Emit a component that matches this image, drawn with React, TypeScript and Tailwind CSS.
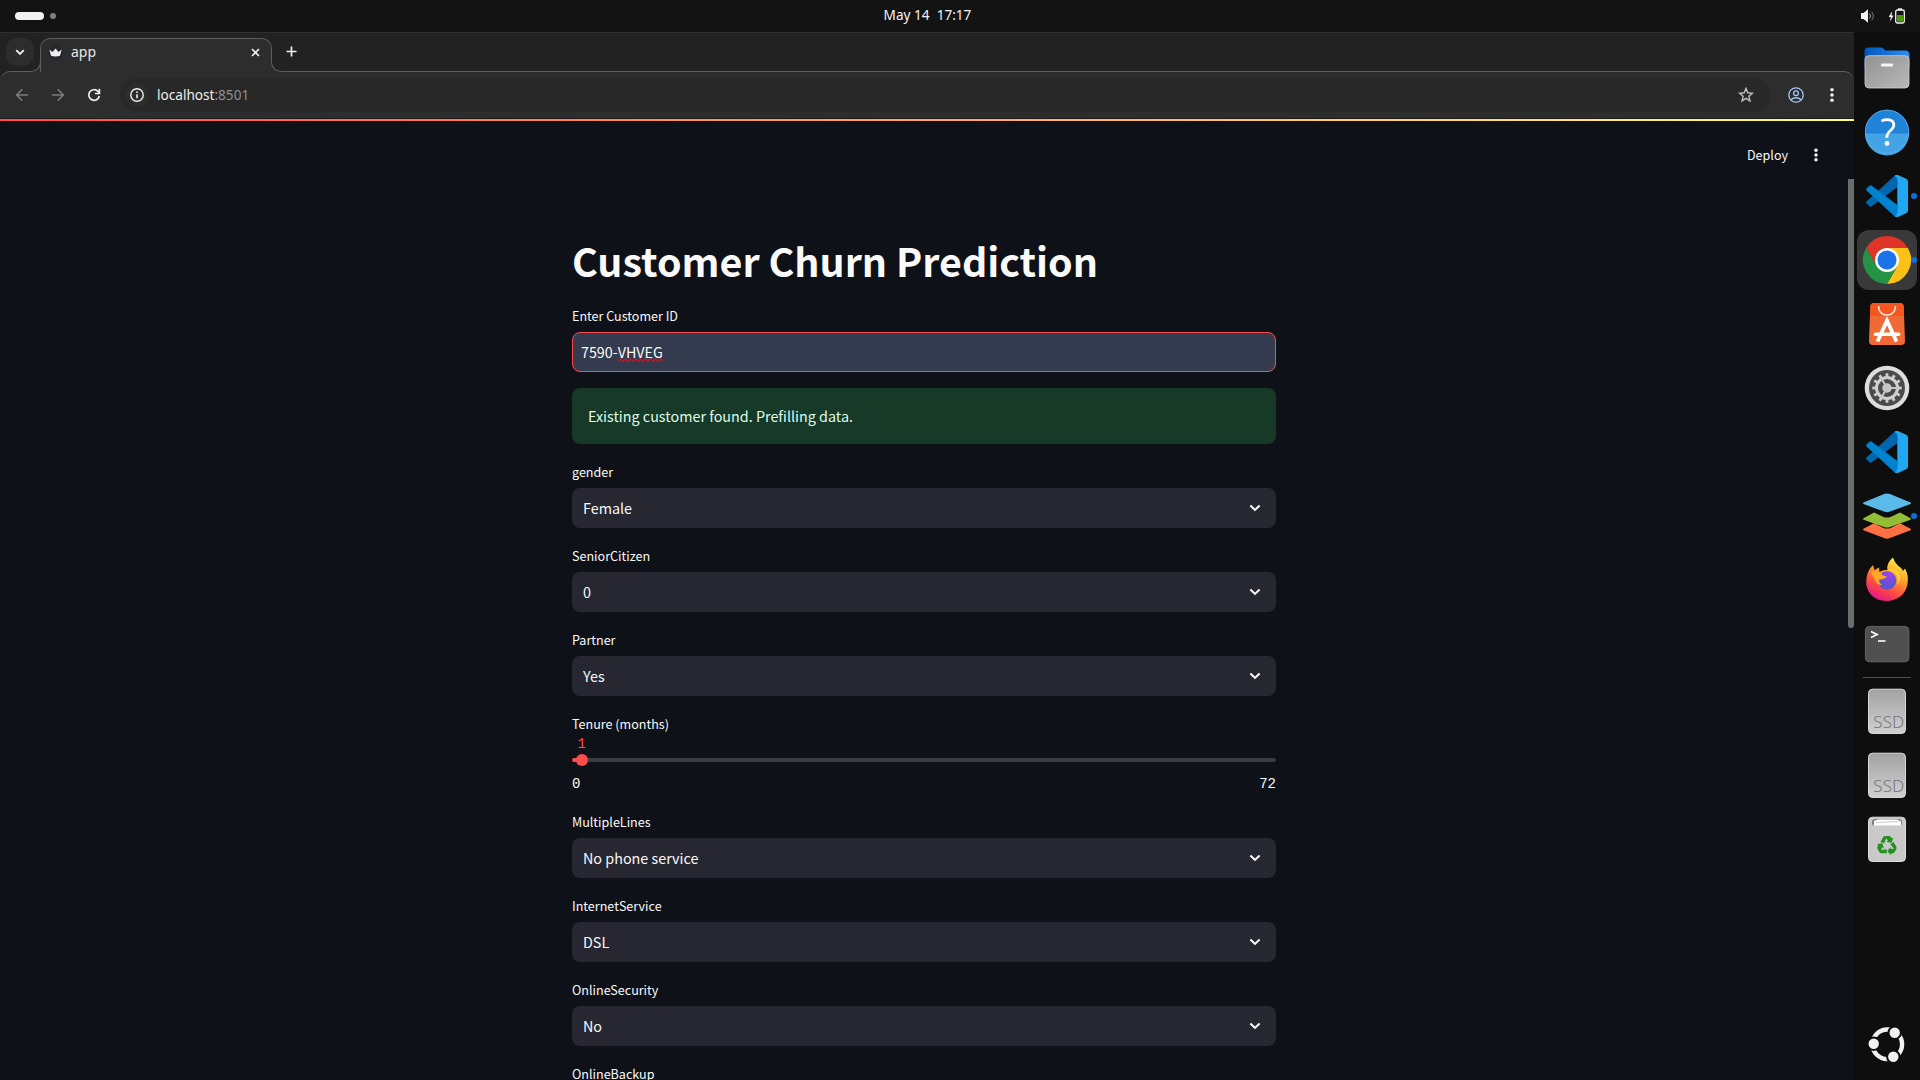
import React from "react";

const SRC = "font-['Noto_Sans_CJK_SC',sans-serif]";
const UI = "font-['Noto_Sans',sans-serif]";

function Chevron() {
  return (
    <svg width="12" height="8" viewBox="0 0 12 8" className="mr-[15px]">
      <path d="M1.4 1.6 L6 5.900 L10.6 1.6" fill="none" stroke="#fafafa" strokeWidth="2.1" />
    </svg>
  );
}

function Label({ text }: { text: string }) {
  return <div className="mb-1.5 h-5 text-[12.55px] leading-5 whitespace-nowrap">{text}</div>;
}

function SelectField({ label, value }: { label: string; value: string }) {
  return (
    <div className="mb-[18px]">
      <Label text={label} />
      <div className="flex h-10 items-center justify-between rounded-lg bg-[#262730] pl-[11px]">
        <span className="text-[14.35px] leading-6">{value}</span>
        <Chevron />
      </div>
    </div>
  );
}

function TenureSlider() {
  return (
    <div className="mb-[18px] h-20">
      <div className="h-5 text-[12.55px] leading-5">Tenure (months)</div>
      <div className="relative h-[60px]">
        <div className="ml-[5.5px] h-[18px] pt-px font-['Liberation_Mono',monospace] text-[14px] leading-[18px] text-[#ff4b4b]">1</div>
        <div className="mt-1.5 h-1 rounded-xs bg-[linear-gradient(to_right,#ff4b4b_1.4%,#3a3c45_1.4%)]" />
        <div className="absolute top-5 left-[3.5px] size-3 rounded-full bg-[#ff4b4b]" />
        <div className="mt-3 flex h-5 justify-between font-['Liberation_Mono',monospace] text-[14px] leading-5">
          <span>0</span>
          <span>72</span>
        </div>
      </div>
    </div>
  );
}

function TopBar() {
  return (
    <header className={`grid h-8 shrink-0 grid-cols-3 items-center bg-[#131313] ${UI}`}>
      <div className="flex items-center gap-1.5 pl-[15px]">
        <div className="h-2 w-[29px] rounded-full bg-[#f2f2f2]" />
        <div className="size-1.5 rounded-full bg-[#808080]" />
      </div>
      <div className="-ml-[65px] text-center text-[13.6px] leading-8 whitespace-pre text-[#f2f2f2]">
        <span className="relative -top-px">{"May 14  17:17"}</span>
      </div>
      <div className="flex items-center justify-end gap-3 pr-[15px]">
        <svg width="16" height="16" viewBox="0 0 16 16">
          <path d="M1 5h2.5L8 1.2v13.6L3.500 11H1z" fill="#f2f2f2" />
          <path d="M9.700 5.500q1.700 2.500 0 5" stroke="#aaa" fill="none" />
          <path d="M11.700 3.700q3.200 4.300 0 8.600" stroke="#777" fill="none" />
        </svg>
        <svg width="17" height="16" viewBox="0 0 17 16">
          <path d="M4.300 3 .6 9h2.200l-.9 4.500L5.600 7.500H3.500z" fill="#f2f2f2" />
          <rect x="7.700" y="2" width="8.600" height="13" rx="1.700" fill="none" stroke="#f2f2f2" strokeWidth="1.300" />
          <rect x="10" y="0.300" width="4" height="1.700" fill="#f2f2f2" />
          <rect x="9" y="7" width="6" height="6.700" fill="#4e9a06" />
        </svg>
      </div>
    </header>
  );
}

function TabStrip() {
  return (
    <div className="flex h-[39px] shrink-0 items-start border-t border-[#303030] bg-[#222222] pl-1.5">
      <div className="mt-[5px] flex size-7 items-center justify-center rounded-[10px] bg-[#2d2d2d]">
        <svg width="10" height="7" viewBox="0 0 10 7"><path d="M1.200 1.200 5 5l3.800-3.800" fill="none" stroke="#eee" strokeWidth="1.800" /></svg>
      </div>
      <div className="relative z-10 mt-[5px] -ml-1 flex h-[34px] items-end">
        <div className="h-[11px] w-[11px] bg-[#2d2d2d]">
          <div className="size-full rounded-br-[10px] border-r border-b border-[#5e5e5e] bg-[#222222]" />
        </div>
        <div className={`-ml-px flex h-[34px] w-[232px] items-center rounded-t-[10px] border-x border-t border-[#5e5e5e] bg-[#2d2d2d] pl-[7px] ${UI}`}>
          <svg width="15" height="15" viewBox="0 0 15 15" className="mb-[7px]">
            <circle cx="7.500" cy="7.500" r="7.500" fill="#262730" />
            <path d="M1.300 4.500 4.500 7 7.500 3.500 10.500 7l3.200-2.500L12 10.800q-4.500 1.200-9 0z" fill="#eee" />
          </svg>
          <span className="mb-[7px] ml-2 text-[14px] leading-5 text-[#e8e8e8]">app</span>
          <svg width="9" height="9" viewBox="0 0 9 9" className="mr-[11px] mb-[7px] ml-auto">
            <path d="M1 1l7 7M8 1L1 8" stroke="#eee" strokeWidth="1.700" />
          </svg>
        </div>
        <div className="-ml-px h-[11px] w-[11px] bg-[#2d2d2d]">
          <div className="size-full rounded-bl-[10px] border-b border-l border-[#5e5e5e] bg-[#222222]" />
        </div>
      </div>
      <svg width="11" height="11" viewBox="0 0 11 11" className="mt-[13px] ml-1">
        <path d="M5.500 .5v10M.5 5.500h10" stroke="#eee" strokeWidth="1.700" />
      </svg>
    </div>
  );
}

function Toolbar() {
  return (
    <div className="h-12 shrink-0 bg-[#222222]">
      <div className="flex h-full items-center rounded-t-[10px] border-t border-b border-t-[#5e5e5e] border-b-[#1c1c1c] bg-[#2d2d2d]">
        <svg width="14" height="14" viewBox="0 0 14 14" className="ml-[15px]">
          <path d="M13 7H2M7.200 1.400 1.600 7l5.600 5.600" fill="none" stroke="#7b7b7b" strokeWidth="1.500" />
        </svg>
        <svg width="14" height="14" viewBox="0 0 14 14" className="ml-[22px]">
          <path d="M1 7h11M6.800 1.400 12.400 7l-5.600 5.600" fill="none" stroke="#7b7b7b" strokeWidth="1.500" />
        </svg>
        <svg width="14" height="14" viewBox="0 0 14 14" className="ml-[22px]">
          <path d="M12.300 8A5.300 5.300 0 1 1 10.800 3.200L12.300 4.800" fill="none" stroke="#eee" strokeWidth="1.700" />
          <path d="M12.400 .8v4.700H8" fill="none" stroke="#eee" strokeWidth="1.700" />
        </svg>
        <div className="ml-[19px] flex h-[34px] w-[1650px] items-center rounded-full bg-[#282828]">
          <div className="ml-[5px] flex size-6 items-center justify-center rounded-full bg-[#2d2d2d]">
            <svg width="14" height="14" viewBox="0 0 14 14">
              <circle cx="7" cy="7" r="6.200" fill="none" stroke="#eee" strokeWidth="1.400" />
              <path d="M7 6.200v4.100M7 3.500v1.600" stroke="#eee" strokeWidth="1.600" />
            </svg>
          </div>
          <div className={`ml-2 text-[13.6px] leading-5 whitespace-nowrap text-[#8f8f8f] ${UI}`}>
            <span className="text-[#eeeeee]">localhost</span>:8501
          </div>
          <svg width="16" height="16" viewBox="0 0 16 16" className="mr-4 ml-auto">
            <path d="M8 1.400 9.800 5.800 14.500 6.200 10.900 9.300 12 13.900 8 11.400 4 13.900 5.100 9.300 1.500 6.200 6.200 5.800z" fill="none" stroke="#c0c0c0" strokeWidth="1.400" />
          </svg>
        </div>
        <svg width="16" height="16" viewBox="0 0 16 16" className="ml-[18px]">
          <circle cx="8" cy="8" r="7.200" fill="none" stroke="#a8c7fa" strokeWidth="1.300" />
          <circle cx="8" cy="6.200" r="2.400" fill="none" stroke="#a8c7fa" strokeWidth="1.300" />
          <path d="M2.800 12.700Q8 8.800 13.200 12.700" fill="none" stroke="#a8c7fa" strokeWidth="1.300" />
        </svg>
        <svg width="4" height="16" viewBox="0 0 4 16" className="ml-[26px]">
          <g fill="#eee"><circle cx="2" cy="2.700" r="1.800" /><circle cx="2" cy="8" r="1.800" /><circle cx="2" cy="13.300" r="1.800" /></g>
        </svg>
      </div>
    </div>
  );
}

function Page() {
  return (
    <div className={`relative min-h-0 grow overflow-hidden bg-[#0e1117] text-[#fafafa] ${SRC}`}>
      <div className="h-0.5 bg-[linear-gradient(to_right,#ff4b4b,#fffd80)]" />
      <div className="flex h-[68px] items-center justify-end pr-9">
        <span className="text-[12.55px] leading-5">Deploy</span>
        <svg width="4" height="14" viewBox="0 0 4 14" className="ml-[26px]">
          <g fill="#fafafa"><circle cx="2" cy="2.200" r="1.700" /><circle cx="2" cy="7" r="1.700" /><circle cx="2" cy="11.800" r="1.700" /></g>
        </svg>
      </div>
      <main className="mx-auto mt-[45px] w-[704px] translate-x-[-3px]">
        <h1 className="mb-5 h-[52px] text-[39.4px] leading-[52px] font-bold whitespace-nowrap">Customer Churn Prediction</h1>
        <Label text="Enter Customer ID" />
        <div className="mb-4 flex h-10 items-center rounded-lg border border-[#ff4b4b] bg-[#343b4e] pl-2 text-[14.3px] leading-6">
          7590-
          <span className="relative">
            VHVEG
            <svg width="45" height="4" viewBox="0 0 45 4" className="absolute bottom-0.5 left-0">
              <path d="M0 3.300 2.500 .8 5 3.300 7.500 .8 10 3.300 12.500 .8 15 3.300 17.500 .8 20 3.300 22.500 .8 25 3.300 27.500 .8 30 3.300 32.500 .8 35 3.300 37.500 .8 40 3.300 42.500 .8 45 3.300" fill="none" stroke="#e0101a" strokeWidth="1.100" />
            </svg>
          </span>
        </div>
        <div className="mb-[18px] flex h-14 items-center rounded-lg bg-[#173928] pl-4 text-[14.35px] leading-6 text-[#dffde9]">
          Existing customer found. Prefilling data.
        </div>
        <SelectField label="gender" value="Female" />
        <SelectField label="SeniorCitizen" value="0" />
        <SelectField label="Partner" value="Yes" />
        <TenureSlider />
        <SelectField label="MultipleLines" value="No phone service" />
        <SelectField label="InternetService" value="DSL" />
        <SelectField label="OnlineSecurity" value="No" />
        <Label text="OnlineBackup" />
      </main>
      <div className="absolute top-[60px] right-0 h-[449px] w-1.5 rounded-b-full bg-[#6b6c70]" />
    </div>
  );
}

function DockTile({ children, active, running }: { children: React.ReactNode; active?: boolean; running?: boolean }) {
  return (
    <div className={`relative size-[60px] shrink-0 rounded-xl ${active ? "bg-[#393939]" : ""}`}>
      <svg width="60" height="60" viewBox="0 0 60 60">{children}</svg>
      {running && <div className="absolute top-[27px] right-0 size-1.5 rounded-full bg-[#0a6fe0]" />}
    </div>
  );
}

function VSCode() {
  return (
    <>
      <path d="M40.300 9 40.300 21 14.500 40.500Q13.500 41 12.500 40.300L9.500 37.600Q8.500 36.500 9.500 35.500L37 10.200Q38.500 8.800 40.300 9z" fill="#0066ad" />
      <path d="M40.300 51 40.300 39 14.500 19.500Q13.500 19 12.500 19.700L9.500 22.400Q8.500 23.500 9.500 24.500L37 49.800Q38.500 51.200 40.300 51z" fill="#0082cf" />
      <path d="M37.500 9.700Q40.300 11 40.300 14V46Q40.300 49 37.500 50.300Q39 51.500 41 50.900L49.500 46.900Q51 46 51 44.500V15.500Q51 14 49.500 13.100L41 9.100Q39 8.500 37.500 9.700z" fill="#22a7f2" />
    </>
  );
}

function Ssd() {
  return (
    <>
      <rect x="11.500" y="8.200" width="37" height="44.300" rx="4" fill="url(#ssd)" stroke="#d8d8d8" />
      <text x="16.300" y="46.700" fontSize="15.600" fill="#777" fontFamily="Noto Sans" fontWeight="300" textLength="31" lengthAdjust="spacingAndGlyphs">SSD</text>
    </>
  );
}

function Dock() {
  const teeth = Array.from({ length: 12 }, (_, i) => i * 30);
  return (
    <aside className="flex w-[66px] shrink-0 flex-col items-center gap-1 bg-[#0e0e0e] pt-1.5">
      <DockTile>
        <defs>
          <linearGradient id="fold" x1="0" x2="1"><stop offset="0" stopColor="#0057b8" /><stop offset="1" stopColor="#2d8cf5" /></linearGradient>
          <linearGradient id="front" x1="0" x2="1" y1="0" y2="1"><stop stopColor="#929292" /><stop offset="1" stopColor="#b8b8b8" /></linearGradient>
          <linearGradient id="ssd" x1="0" x2="0" y1="0" y2="1"><stop stopColor="#a2a2a2" /><stop offset="1" stopColor="#d0d0d0" /></linearGradient>
        </defs>
        <g transform="translate(0 -.5)">
          <path d="M7.500 14q0-4 4-4H24q2 0 3 1.500l1 1.500h20q4.500 0 4.500 4.500V30h-45z" fill="url(#fold)" />
          <rect x="8" y="18.200" width="44" height="32.300" rx="4" fill="url(#front)" stroke="#d0d0d0" strokeWidth=".8" />
          <rect x="24" y="26" width="12" height="3" rx="1" fill="#f5f5f5" />
        </g>
      </DockTile>
      <DockTile>
        <g transform="translate(0 -.3)">
          <circle cx="30" cy="30" r="22" fill="#2083d8" />
          <path d="M8 31.700A22 22 0 0 0 52 31.700z" fill="#43a3e4" />
          <circle cx="30" cy="30" r="21.600" fill="none" stroke="#5eb2ee" strokeWidth=".8" />
          <path d="M24.500 19.200Q30 16.800 34.300 18.800Q38 21 36.300 25.500Q35.300 27.500 32.500 29.800Q29.800 32 29.900 36.200" fill="none" stroke="#fff" strokeWidth="2.700" />
          <circle cx="30" cy="41.800" r="2.400" fill="#fff" />
        </g>
      </DockTile>
      <DockTile running><VSCode /></DockTile>
      <DockTile active running>
        <path d="M9.200 18A24 24 0 0 1 50.800 18H30L19.600 36z" fill="#df3428" />
        <path d="M50.800 18A24 24 0 0 1 30 54L40.400 36 30 18z" fill="#fbc116" />
        <path d="M30 54A24 24 0 0 1 9.200 18L19.600 36H40.400z" fill="#249345" />
        <circle cx="30" cy="30" r="12" fill="#fff" />
        <circle cx="30" cy="30" r="9.500" fill="#1a73e8" />
      </DockTile>
      <DockTile>
        <path d="M17 9H43q3.500 0 3.700 3.500L48 47q0 4-4 4H16q-4 0-4-4L13.300 12.500Q13.500 9 17 9z" fill="#f06a35" />
        <path d="M17 9H43q3.500 0 3.700 3.500L47 22H13L13.300 12.500Q13.500 9 17 9z" fill="#f4561f" />
        <path d="M21.500 12Q22 21 30 21T38.500 12" fill="none" stroke="#fbe3d8" strokeWidth="1.700" />
        <path d="M20.500 47.500 30 26.500 39.500 47.500" fill="none" stroke="#fff" strokeWidth="3.800" />
        <path d="M18.500 40.300H41.500" stroke="#fff" strokeWidth="3.600" strokeLinecap="round" />
      </DockTile>
      <DockTile>
        <circle cx="30" cy="30" r="22.300" fill="#dedede" />
        <circle cx="30" cy="30" r="18" fill="#4b4b4b" />
        {teeth.map((a) => (
          <rect key={a} x="28.600" y="15.300" width="2.800" height="4" fill="#d0d0d0" transform={`rotate(${a} 30 30)`} />
        ))}
        <circle cx="30" cy="30" r="10.500" fill="none" stroke="#d0d0d0" strokeWidth="3" />
        <circle cx="30" cy="30" r="4.700" fill="#c6c6c6" />
        {[0, 120, 240].map((a) => (
          <path key={a} d="M30 30H19.500" stroke="#c6c6c6" strokeWidth="2" transform={`rotate(${a + 60} 30 30)`} />
        ))}
      </DockTile>
      <DockTile><VSCode /></DockTile>
      <DockTile running>
        <path d="M6.500 45.200Q5.500 44.500 6.500 43.800L17 38.300 26 42.700Q30 44.500 34 42.700L43 38.300 53.500 43.800Q54.500 44.500 53.500 45.200L33 53Q30 54.300 27 53L6.500 45.200z" transform="translate(0 -1)" fill="#ff7043" />
        <path d="M6.500 34.200Q5.500 33.500 6.500 32.800L17 27 26 31.200Q30 33 34 31.200L43 27 53.500 32.800Q54.500 33.500 53.500 34.200L33 41.500Q30 42.500 27 41.500L6.500 34.200z" transform="translate(0 -.5)" fill="#94bd36" />
        <path d="M6.500 18Q5.500 17.300 6.500 16.600L27 8Q30 6.800 33 8L53.500 16.600Q54.500 17.300 53.500 18L33 25.600Q30 26.800 27 25.600z" fill="#5bbbe8" />
      </DockTile>
      <DockTile>
        <defs>
          <linearGradient id="fox" x1=".8" y1="0" x2=".3" y2="1"><stop offset=".05" stopColor="#fff04a" /><stop offset=".4" stopColor="#ffa02a" /><stop offset=".7" stopColor="#ff4d40" /><stop offset="1" stopColor="#e8118c" /></linearGradient>
          <radialGradient id="globe" cx=".6" cy=".2"><stop stopColor="#a63ef0" /><stop offset="1" stopColor="#6253d4" /></radialGradient>
        </defs>
        <path d="M36 7.500Q38 14 43.500 17.500Q45.500 19 46 21L48 18.500Q51.500 25 50.800 31.500Q49 49 31 51Q12 51 9.200 34Q8.500 22 16 15L17.500 20 22 17.500 22.500 22Q26 19.500 30.500 20Q29 13 36 7.500z" fill="url(#fox)" />
        <circle cx="30" cy="30.500" r="9.300" fill="url(#globe)" />
        <path d="M14 22Q20 20 25 23Q22.500 25 30 26.500Q27 29.500 22.500 29.500Q21 32 25 35Q19 35 17.500 29Q16 26 14 22z" fill="#ffab25" />
        <path d="M30 20Q37 20 40 26Q42 31 39 36Q46 29 41 22Q37 17 30 20z" fill="#ffd23b" />
      </DockTile>
      <DockTile>
        <rect x="8.400" y="12.400" width="43.500" height="35.400" rx="4" fill="#505050" stroke="#6a6a6a" strokeWidth=".9" />
        <path d="M14 17.500 20 20.500 14 23.500" fill="none" stroke="#fff" strokeWidth="1.800" />
        <path d="M21 27H28.500" stroke="#fff" strokeWidth="1.600" />
      </DockTile>
      <div className="-my-px h-px w-12 shrink-0 bg-[#4d4d4d]" />
      <DockTile><Ssd /></DockTile>
      <DockTile><Ssd /></DockTile>
      <DockTile>
        <rect x="11.500" y="8.200" width="37" height="44.300" rx="4" fill="#c9c9c9" stroke="#dedede" />
        <rect x="15" y="10.300" width="30" height="6.500" rx="3" fill="#777" />
        <path d="M17 16.800V12l4-1.500H40L44 12.500V16.800z" fill="#fff" />
        <path d="M19 13.500 41 12.500" stroke="#aaa" strokeWidth=".6" />
        <g transform="translate(30 36.700) scale(1.080)">
          {[0, 120, 240].map((a) => (
            <g key={a} transform={`rotate(${a})`} fill="#22911f">
              <path d="M-6-3.500-3.500-8Q-2.700-9 -1.500-9H1.800Q3-9 3.700-8L4.500-6.700 6-7.500 4.200-2.700-.8-3.600.9-4.500-.8-7-2.700-2z" />
            </g>
          ))}
        </g>
      </DockTile>
      <div className="mt-auto mb-1.5">
        <DockTile>
          <circle cx="30.300" cy="30.300" r="14.800" fill="none" stroke="#f2f2f2" strokeWidth="4.400" />
          <g fill="#f2f2f2" stroke="#0e0e0e" strokeWidth="2">
            <circle cx="16.700" cy="29.700" r="6.200" />
            <circle cx="37.700" cy="18.700" r="6.200" />
            <circle cx="36.300" cy="42.700" r="6.200" />
          </g>
        </DockTile>
      </div>
    </aside>
  );
}

export default function App() {
  return (
    <div className="flex h-[1080px] w-[1920px] flex-col overflow-hidden bg-[#0e0e0e]">
      <TopBar />
      <div className="flex min-h-0 grow">
        <div className="flex w-[1854px] shrink-0 flex-col">
          <TabStrip />
          <Toolbar />
          <Page />
        </div>
        <Dock />
      </div>
    </div>
  );
}
